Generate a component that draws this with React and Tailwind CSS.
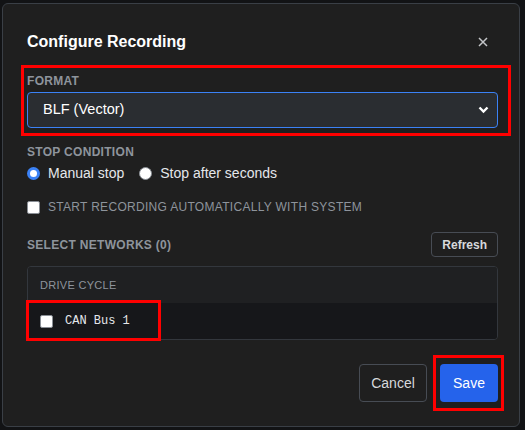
import { useState } from "react";

const Radio = ({ checked, label, onClick }) => (
  <button type="button" onClick={onClick} className="flex items-center gap-[8px]">
    {checked ? (
      <span className="flex h-[13px] w-[13px] items-center justify-center rounded-full bg-[#3b82f6]">
        <span className="h-[7px] w-[7px] rounded-full bg-white" />
      </span>
    ) : (
      <span className="h-[13px] w-[13px] rounded-full border border-[#8a8f96] bg-white" />
    )}
    <span className="text-[14px] leading-5 text-[#e5e7eb]">{label}</span>
  </button>
);

const Box = () => <span className="h-[13px] w-[13px] shrink-0 rounded-[2px] border border-[#8a8f96] bg-white" />;

export default function App() {
  const [stop, setStop] = useState("manual");

  return (
    <div className="relative h-[430px] w-[525px] overflow-hidden bg-[#121315] font-['Liberation_Sans',Arial,sans-serif]">
      <div className="ml-[2px] mt-[3px] flex h-[424px] w-[518px] flex-col rounded-[6px] border border-[#3a3f46] bg-[#1f1f1f] pl-6 pr-[21px] pt-[26px]">
        <div className="flex h-6 items-center justify-between">
          <h2 className="text-[16px] font-bold text-white">Configure Recording</h2>
          <button type="button" className="mr-[10px] text-[#c4c6c9]" aria-label="Close">
            <svg width="10" height="10" viewBox="0 0 10 10" stroke="currentColor" strokeWidth="1.5">
              <path d="M1 1l8 8M9 1l-8 8" />
            </svg>
          </button>
        </div>

        <p className="mt-[19px] text-[12px] font-bold leading-4 tracking-[0.3px] text-[#8e949c]">FORMAT</p>
        <div className="mt-[3px] flex h-[36px] items-center justify-between rounded-[4px] border border-[#3b82f6] bg-[#2a2d31] pl-[15px] pr-[8px]">
          <span className="text-[14.5px] text-white">BLF (Vector)</span>
          <svg width="11" height="8" viewBox="0 0 11 8" fill="none" stroke="white" strokeWidth="2.4">
            <path d="M1.5 1.5l4 4 4-4" />
          </svg>
        </div>

        <p className="mt-[16px] text-[12px] font-bold leading-4 tracking-[0.3px] text-[#8e949c]">STOP CONDITION</p>
        <div className="mt-[3px] flex h-5 items-center gap-[15px]">
          <Radio checked={stop === "manual"} label="Manual stop" onClick={() => setStop("manual")} />
          <Radio checked={stop === "seconds"} label="Stop after seconds" onClick={() => setStop("seconds")} />
        </div>

        <div className="mt-[16px] flex h-4 items-center gap-[8px]">
          <Box />
          <span className="text-[12px] tracking-[0.3px] text-[#8e949c]">START RECORDING AUTOMATICALLY WITH SYSTEM</span>
        </div>

        <div className="mt-[17px] flex h-[25px] items-center justify-between">
          <p className="text-[12px] font-bold tracking-[0.3px] text-[#8e949c]">SELECT NETWORKS (0)</p>
          <button type="button" className="h-[25px] rounded-[4px] border border-[#474c54] px-[10px] text-[12px] font-bold text-[#d7d9dc]">
            Refresh
          </button>
        </div>

        <div className="mt-[9px] overflow-hidden rounded-[4px] border border-[#33373d]">
          <div className="flex h-[36px] items-center bg-[#1f2022] px-3 text-[11px] tracking-[0.3px] text-[#8e949c]">DRIVE CYCLE</div>
          <div className="flex h-[36px] items-center gap-[12px] bg-[#16171a] px-3">
            <Box />
            <span className="font-['Liberation_Mono',monospace] text-[12px] text-[#e5e7eb]">CAN Bus 1</span>
          </div>
        </div>

        <div className="mt-[24px] flex justify-end gap-[13px]">
          <button type="button" className="h-[38px] w-[68px] rounded-[4px] border border-[#474c54] text-[14px] text-[#d7d9dc]">
            Cancel
          </button>
          <button type="button" className="h-[38px] w-[58px] rounded-[4px] bg-[#2563eb] text-[14px] text-white">
            Save
          </button>
        </div>
      </div>

      <div className="pointer-events-none absolute left-[21px] top-[65px] h-[71px] w-[490px] border-[3px] border-[#ff0000]" />
      <div className="pointer-events-none absolute left-[26px] top-[300px] h-[41px] w-[135px] border-[3px] border-[#ff0000]" />
      <div className="pointer-events-none absolute left-[433px] top-[355px] h-[56px] w-[71px] border-[3px] border-[#ff0000]" />
    </div>
  );
}
